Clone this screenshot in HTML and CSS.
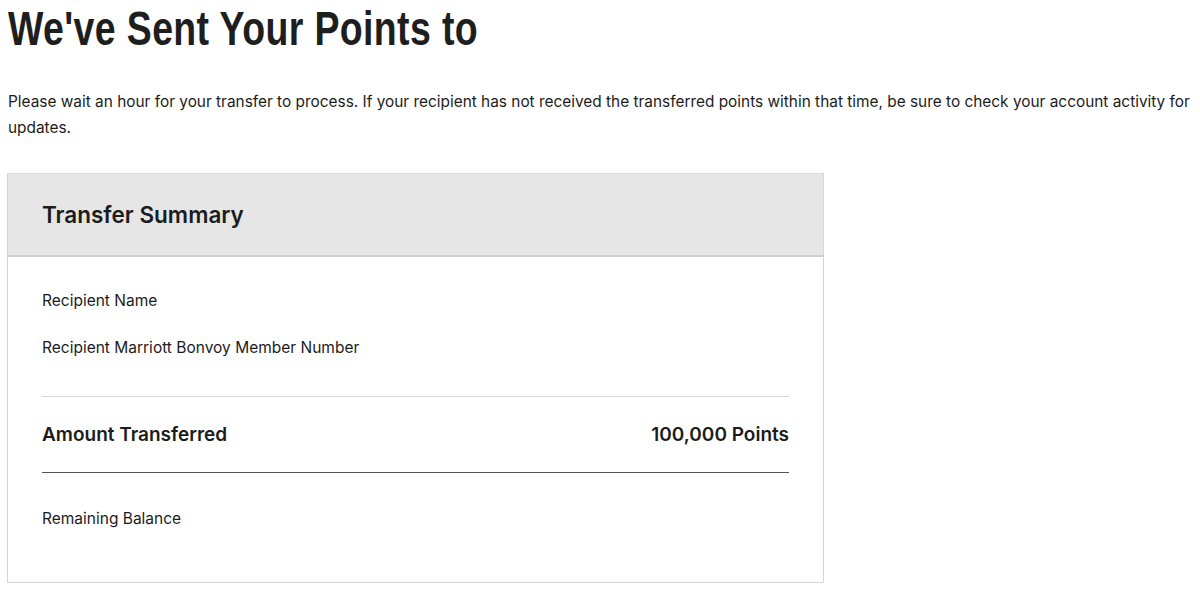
FILE: index.html
```html
<!DOCTYPE html>
<html>
<head>
<meta charset="utf-8">
<link rel="stylesheet" href="styles.css">
</head>
<body>
<main class="page">
  <h1 class="title"><span class="title-text">We've Sent Your Points to</span></h1>
  <p class="intro">Please wait an hour for your transfer to process. If your recipient has not received the transferred points within that time, be sure to check your account activity for updates.</p>
  <section class="card">
    <header class="card-head">
      <h2 class="card-title">Transfer Summary</h2>
    </header>
    <div class="card-body">
      <div class="row">Recipient Name</div>
      <div class="row row-second">Recipient Marriott Bonvoy Member Number</div>
      <div class="divider-light"></div>
      <div class="total">
        <span>Amount Transferred</span>
        <span>100,000 Points</span>
      </div>
      <div class="divider-dark"></div>
      <div class="row row-balance">Remaining Balance</div>
    </div>
  </section>
</main>
</body>
</html>
```
FILE: styles.css
```css
html, body {
  margin: 0;
  padding: 0;
  background: #fff;
}
body {
  font-family: "Inter", "Liberation Sans", sans-serif;
  color: #1c1c1c;
}
.page {
  padding: 0 8px;
}
.title {
  margin: 0;
  padding-top: 1px;
  font-family: "Liberation Sans", "Arial", sans-serif;
  font-weight: 700;
  font-size: 48px;
  line-height: 56px;
  color: #1e1e1e;
  white-space: nowrap;
}
.title-text {
  display: inline-block;
  transform: scaleX(0.78);
  transform-origin: 0 50%;
  letter-spacing: 0.5px;
}
.intro {
  margin: 32px 0 0 0;
  font-size: 15.4px;
  line-height: 26px;
  color: #1c1c1c;
}
.card {
  margin: 32px 0 0 -1px;
  width: 815px;
  border: 1px solid #d6d6d6;
  border-top-color: #dcdcdc;
}
.card-head {
  background: #e6e6e6;
  height: 81px;
  border-bottom: 2px solid #cfcfcf;
  display: flex;
  align-items: center;
  padding: 0 34px;
}
.card-title {
  margin: 0;
  font-size: 22.5px;
  font-weight: 600;
  color: #1c1c1c;
}
.card-body {
  padding: 32px 34px 51px 34px;
}
.row {
  font-size: 15.5px;
  line-height: 24px;
}
.row-second {
  margin-top: 23px;
}
.divider-light {
  margin-top: 36px;
  height: 1px;
  background: #d9d9d9;
}
.total {
  display: flex;
  justify-content: space-between;
  margin-top: 25px;
  font-size: 19px;
  line-height: 26px;
  font-weight: 600;
}
.divider-dark {
  margin-top: 24px;
  height: 1px;
  background: #555;
}
.row-balance {
  margin-top: 34px;
}
```
